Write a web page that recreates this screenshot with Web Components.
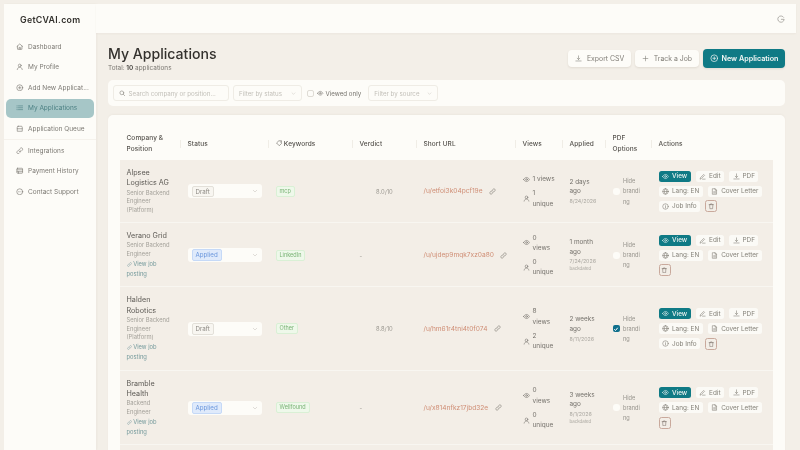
<!DOCTYPE html>
<html lang="en">
<head>
<meta charset="utf-8">
<title>My Applications</title>
<style>
  html, body { margin: 0; height: 100%; overflow: hidden; background: #f3efe8; }
  body { font-family: Inter, "Noto Sans", sans-serif; color: #3f3d39; }
</style>
</head>
<body>
<app-shell>
  <app-sidebar slot="side">
    <nav-item icon="home">Dashboard</nav-item>
    <nav-item icon="user">My Profile</nav-item>
    <nav-item icon="plus">Add New Applicat...</nav-item>
    <nav-item icon="list" active>My Applications</nav-item>
    <nav-item icon="queue">Application Queue</nav-item>
    <nav-item icon="link" slot="more">Integrations</nav-item>
    <nav-item icon="card" slot="more">Payment History</nav-item>
    <nav-item icon="chat" slot="more">Contact Support</nav-item>
  </app-sidebar>
  <top-bar slot="top"></top-bar>
  <page-header>
    <ui-button slot="actions" icon="download">Export CSV</ui-button>
    <ui-button slot="actions" icon="cross">Track a Job</ui-button>
    <ui-button slot="actions" icon="plus" primary>New Application</ui-button>
  </page-header>
  <filter-bar></filter-bar>
  <app-table>
    <app-row company="Alpsee Logistics AG" position="Senior Backend Engineer (Platform)" status="Draft" keyword="mcp" verdict="8.0/10" url="/u/etfoi3k04pcf19e" views="1 views" unique="1<br>unique" applied="2 days ago" date="8/24/2026" jobinfo></app-row>
    <app-row company="Verano Grid" position="Senior Backend Engineer" link status="Applied" keyword="LinkedIn" url="/u/ujdep9mqk7xz0a80" views="0<br>views" unique="0<br>unique" applied="1 month ago" date="7/24/2026" backdated></app-row>
    <app-row company="Halden Robotics" position="Senior Backend Engineer (Platform)" link status="Draft" keyword="Other" verdict="8.8/10" url="/u/hm61r4tni4t0f074" views="8<br>views" unique="2<br>unique" applied="2 weeks ago" date="8/11/2026" hidden-brand jobinfo></app-row>
    <app-row company="Bramble Health" position="Backend Engineer" link status="Applied" keyword="Wellfound" url="/u/x814nfkz17jbd32e" views="0<br>views" unique="0<br>unique" applied="3 weeks ago" date="8/1/2026" backdated></app-row>
  </app-table>
</app-shell>

<script>
const paths = {
  home: '<path d="M3 11l9-8 9 8"/><path d="M5 10v10h14V10"/><path d="M10 20v-6h4v6"/>',
  user: '<circle cx="12" cy="8" r="4.500"/><path d="M4 21c1-5 4-7.500 8-7.500s7 2.500 8 7.500"/>',
  plus: '<circle cx="12" cy="12" r="9.500"/><path d="M12 8v8M8 12h8"/>',
  list: '<path d="M8 6h13M8 12h13M8 18h13M3 6h1M3 12h1M3 18h1"/>',
  queue: '<path d="M7 4h10a3 3 0 0 1 3 3v13H4V7a3 3 0 0 1 3-3z"/><path d="M4 12h16"/>',
  link: '<path d="M10 14a4 4 0 0 0 6 0l4-4a4 4 0 0 0-6-6l-1.500 1.500"/><path d="M14 10a4 4 0 0 0-6 0l-4 4a4 4 0 0 0 6 6l1.500-1.500"/>',
  card: '<rect x="3" y="4" width="18" height="16" rx="2"/><path d="M3 9h18M3 15h18M8 15v5"/>',
  chat: '<circle cx="12" cy="12" r="9.500"/><path d="M8 12h.01M12 12h.01M16 12h.01"/>',
  download: '<path d="M12 3v12M7.500 11l4.500 4.500 4.500-4.500"/><path d="M3 20.500h18"/>',
  cross: '<path d="M12 4v16M4 12h16"/>',
  search: '<circle cx="10.500" cy="10.500" r="7"/><path d="M16 16l5 5"/>',
  chevron: '<path d="M5 9l7 7 7-7"/>',
  eye: '<path d="M2 12s3.500-7 10-7 10 7 10 7-3.500 7-10 7-10-7-10-7z"/><circle cx="12" cy="12" r="3"/>',
  tag: '<path d="M12 3h9v9l-9 9-9-9z"/><path d="M16.500 7.500h.01"/>',
  edit: '<path d="M4 20l1-4L16 5l3 3L8 19z"/><path d="M12 21h9"/>',
  globe: '<circle cx="12" cy="12" r="9.500"/><path d="M2.500 12h19M12 2.500c3 3 4 6 4 9.500s-1 6.500-4 9.500c-3-3-4-6-4-9.500s1-6.500 4-9.500z"/>',
  file: '<path d="M6 2.500h8l5 5v14H6z"/><path d="M14 2.500v5h5M9 13h7M9 17h7"/>',
  info: '<circle cx="12" cy="12" r="9.500"/><path d="M12 11v6M12 7.500h.01"/>',
  trash: '<path d="M4 6h16M9 6V3.500h6V6M6 6l1 15h10l1-15"/>',
  refresh: '<path d="M20 7a9.500 9.500 0 1 0 1.500 6H13"/>'
};
const icon = (name, size, width = 2) => `<svg width="${size}" height="${size}" viewBox="0 0 24 24" fill="none" stroke="currentColor" stroke-width="${width}" stroke-linecap="round" stroke-linejoin="round" aria-hidden="true">${paths[name]}</svg>`;

const COLUMNS = '61px 88px 84px 64px 99px 47px 43px 46px 121px';

class BaseElement extends HTMLElement {
  connectedCallback() {
    if (!this.shadowRoot) {
      this.attachShadow({ mode: 'open' }).innerHTML = this.template;
    }
  }
}

class AppShell extends BaseElement {
  get template() {
    return `
      <style>
        :host {
          display: grid;
          grid-template-columns: 92px 1fr;
          grid-template-rows: 29px 1fr;
          height: 446px;
          padding: 4px 4px 0;
          overflow: hidden;
          filter: blur(.45px);
        }
        .side { grid-row: 1 / 3; display: flex; min-height: 0; }
        .content { padding: 12.500px 11px 0 12px; min-width: 0; overflow: hidden; }
      </style>
      <div class="side"><slot name="side"></slot></div>
      <slot name="top"></slot>
      <div class="content"><slot></slot></div>
    `;
  }
}

class AppSidebar extends BaseElement {
  get template() {
    return `
      <style>
        :host {
          display: block;
          width: 92px;
          background: #fdfcf8;
          box-shadow: 1px 0 2px rgba(90, 80, 60, .05);
        }
        h1 {
          margin: 0;
          height: 29px;
          font: 600 8.800px/31px Inter, sans-serif;
          letter-spacing: .3px;
          color: #33312d;
          padding-left: 16px;
        }
        nav { display: flex; flex-direction: column; gap: 1.500px; padding: 4px 2px 0; }
        .rule { height: 1px; background: #f5f2ec; margin: -.5px -2px; }
      </style>
      <h1>GetCVAI.com</h1>
      <nav>
        <slot></slot>
        <div class="rule"></div>
        <slot name="more"></slot>
      </nav>
    `;
  }
}

class NavItem extends BaseElement {
  get template() {
    const active = this.hasAttribute('active');
    return `
      <style>
        :host {
          display: flex;
          align-items: center;
          gap: 4.500px;
          height: 19px;
          padding-left: 10px;
          border-radius: 5px;
          font-size: 6.500px;
          white-space: nowrap;
          color: ${active ? '#4d8184' : '#7d7a74'};
          background: ${active ? '#a6c6c7' : 'transparent'};
        }
        svg { flex: none; }
      </style>
      ${icon(this.getAttribute('icon'), 7.500)}
      <slot></slot>
    `;
  }
}

class TopBar extends BaseElement {
  get template() {
    return `
      <style>
        :host {
          display: flex;
          align-items: center;
          justify-content: flex-end;
          padding-right: 11px;
          background: #fdfcf8;
          color: #85827c;
          box-shadow: 0 1px 2px rgba(90, 80, 60, .05);
        }
        svg { display: block; }
      </style>
      ${icon('refresh', 8, 1.800)}
    `;
  }
}

class UiButton extends BaseElement {
  get template() {
    const primary = this.hasAttribute('primary');
    return `
      <style>
        :host {
          display: inline-flex;
          align-items: center;
          gap: ${primary ? 3.500 : 4.500}px;
          height: ${primary ? 19 : 17}px;
          padding: 0 ${primary ? 6.500 : 7}px;
          border-radius: 4px;
          font-size: ${primary ? 7.200 : 6.900}px;
          font-weight: ${primary ? 600 : 400};
          white-space: nowrap;
          color: ${primary ? '#f4f7f5' : '#827f78'};
          background: ${primary ? '#0f7a85' : '#fdfcf8'};
          box-shadow: 0 1px 2px rgba(90, 80, 60, .12);
        }
      </style>
      ${icon(this.getAttribute('icon'), primary ? 8.500 : 7)}
      <slot></slot>
    `;
  }
}

class PageHeader extends BaseElement {
  get template() {
    return `
      <style>
        :host { display: flex; justify-content: space-between; align-items: flex-start; height: 34.500px; }
        h2 { margin: 0; font-size: 14.100px; line-height: 16px; font-weight: 500; color: #33312d; }
        p { margin: 2.500px 0 0; font-size: 6.400px; line-height: 8px; color: #7a7771; }
        b { font-weight: 600; color: #45433f; }
        .actions { display: flex; align-items: center; gap: 4px; margin-top: 3px; }
      </style>
      <div>
        <h2>My Applications</h2>
        <p>Total: <b>10</b> applications</p>
      </div>
      <div class="actions"><slot name="actions"></slot></div>
    `;
  }
}

class FilterBar extends BaseElement {
  get template() {
    return `
      <style>
        :host {
          display: flex;
          align-items: center;
          height: 26px;
          margin-bottom: 9px;
          padding-left: 5px;
          box-sizing: border-box;
          background: #fdfcf8;
          border-radius: 5px;
          font-size: 6.200px;
        }
        .field {
          display: flex;
          align-items: center;
          justify-content: space-between;
          box-sizing: border-box;
          height: 16px;
          padding: 0 5px;
          border: 1px solid #efece5;
          border-radius: 3px;
          color: #c2bfb8;
          white-space: nowrap;
        }
        .search { width: 116px; margin-right: 4px; justify-content: flex-start; gap: 3px; }
        .search svg { color: #8f8c86; }
        .status { width: 69px; margin-right: 5px; }
        .source { width: 70px; margin-left: 7px; }
        .box { width: 7px; height: 7px; border: 1px solid #dfdcd5; border-radius: 2px; box-sizing: border-box; margin-right: 3px; }
        .viewed { display: flex; align-items: center; gap: 2px; color: #77746e; white-space: nowrap; }
      </style>
      <div class="field search">${icon('search', 6.500, 2.400)}<span>Search company or position...</span></div>
      <div class="field status"><span>Filter by status</span>${icon('chevron', 5)}</div>
      <div class="box"></div>
      <div class="viewed">${icon('eye', 6.500)}<span>Viewed only</span></div>
      <div class="field source"><span>Filter by source</span>${icon('chevron', 5)}</div>
    `;
  }
}

class AppTable extends BaseElement {
  get template() {
    const heads = [
      'Company &amp; Position', 'Status', `${icon('tag', 6.500)} Keywords`, 'Verdict',
      'Short URL', 'Views', 'Applied', 'PDF Options', 'Actions'
    ];
    return `
      <style>
        :host {
          display: block;
          padding: 10px 12px 0;
          background: #fdfcf8;
          border-radius: 5px 5px 0 0;
          box-shadow: 0 -1px 2px rgba(90, 80, 60, .04);
        }
        header {
          display: grid;
          grid-template-columns: ${COLUMNS};
          align-items: center;
          box-sizing: border-box;
          height: 35px;
          padding-top: 2.500px;
          font-size: 6.500px;
          line-height: 10.300px;
          font-weight: 500;
          color: #55524d;
          letter-spacing: .1px;
        }
        header div { padding-left: 6.500px; position: relative; }
        header div + div::before {
          content: "";
          position: absolute;
          left: -1px;
          top: 50%;
          height: 8px;
          margin-top: -4px;
          width: 1px;
          background: #f0ede6;
        }
        svg { vertical-align: -1px; }
        .more { height: 30px; background: #f3eee7; }
      </style>
      <header>${heads.map(h => `<div>${h}</div>`).join('')}</header>
      <slot></slot>
      <div class="more"></div>
    `;
  }
}

class ActionChip extends BaseElement {
  get template() {
    const primary = this.hasAttribute('primary');
    return `
      <style>
        :host {
          display: inline-flex;
          align-items: center;
          gap: 3px;
          box-sizing: border-box;
          height: 11px;
          padding: 0 3.500px;
          border-radius: 2.500px;
          font-size: 6.400px;
          white-space: nowrap;
          color: ${primary ? '#eef5f3' : '#858279'};
          font-weight: ${primary ? 500 : 400};
          background: ${primary ? '#0f7a85' : '#fbfaf6'};
        }
        svg { flex: none; }
      </style>
      ${icon(this.getAttribute('icon'), 7)}
      <slot></slot>
    `;
  }
}

class AppRow extends BaseElement {
  get template() {
    const a = name => this.getAttribute(name);
    const has = name => this.hasAttribute(name);
    const applied = a('status') === 'Applied';
    return `
      <style>
        :host {
          display: grid;
          grid-template-columns: ${COLUMNS};
          align-items: center;
          padding: 8px 0 7px;
          background: #f3eee7;
          border-bottom: 1px solid #f8f6f1;
          font-size: 6.700px;
          color: #75726c;
        }
        .cell { padding-left: 6.500px; min-width: 0; }
        .company { padding-right: 11.500px; }
        .name { font-size: 7.200px; line-height: 10.300px; color: #5d5a55; }
        .pos { font-size: 5.800px; line-height: 8.800px; color: #a5a29b; }
        .job { font-size: 5.800px; line-height: 10.200px; color: #759a9c; }
        .job svg { vertical-align: -1px; }
        .select {
          display: flex;
          align-items: center;
          justify-content: space-between;
          box-sizing: border-box;
          width: 74px;
          height: 14px;
          padding: 0 4px;
          background: #fdfcf8;
          border-radius: 3px;
          color: #c2bfb8;
        }
        .badge {
          font-size: 6.200px;
          line-height: 9.500px;
          padding: 0 3px;
          border-radius: 2px;
          border: .5px solid ${applied ? '#c5d9f7' : '#e3e0d9'};
          color: ${applied ? '#6a96dc' : '#8c8983'};
          background: ${applied ? '#dfeafb' : '#f8f6f1'};
        }
        .tag {
          display: inline-block;
          font-size: 5.500px;
          line-height: 9px;
          padding: 0 3px;
          border-radius: 2px;
          border: .5px solid #d9f0d5;
          background: #eef8ea;
          color: #78b374;
        }
        .verdict { font-size: 5.800px; color: #9c9992; }
        .verdict.score { padding-left: 23px; }
        .url { display: flex; align-items: center; gap: 6.500px; white-space: nowrap; font-size: 6.600px; color: #cf8d74; }
        .url svg { color: #7f7c76; flex: none; }
        .stat { display: grid; grid-template-columns: 10px 28px; align-items: center; font-size: 6.500px; line-height: 10.300px; }
        .stat + .stat { margin-top: 3.800px; }
        .stat svg { display: block; }
        .applied { padding-right: 11px; }
        .when { font-size: 6.400px; line-height: 9.800px; }
        .date { font-size: 5.300px; line-height: 8px; color: #aaa7a0; }
        .small { font-size: 4.400px; line-height: 7px; color: #aaa7a0; }
        .pdf { display: flex; align-items: center; gap: 3.500px; font-size: 5.600px; line-height: 10.300px; color: #95928b; }
        .check {
          flex: none;
          display: flex;
          align-items: center;
          justify-content: center;
          width: 7px;
          height: 7px;
          border-radius: 3px;
          background: #fdfcf8;
          color: #fff;
        }
        .check.on { background: #0f6f8c; border-radius: 2px; }
        .pdf span { width: 17px; overflow-wrap: anywhere; }
        .actions { display: flex; flex-wrap: wrap; gap: 4px 5px; align-items: center; }
        .trash {
          display: flex;
          align-items: center;
          justify-content: center;
          box-sizing: border-box;
          width: 12px;
          height: 12px;
          margin: -.5px 0;
          border: .7px solid #c9a99c;
          border-radius: 2.500px;
          color: #7b6f68;
        }
      </style>
      <div class="cell company">
        <div class="name">${a('company')}</div>
        <div class="pos">${a('position')}</div>
        ${has('link') ? `<div class="job">${icon('link', 5)} View job posting</div>` : ''}
      </div>
      <div class="cell">
        <div class="select"><span class="badge">${a('status')}</span>${icon('chevron', 6)}</div>
      </div>
      <div class="cell"><span class="tag">${a('keyword')}</span></div>
      <div class="cell verdict ${has('verdict') ? 'score' : ''}">${a('verdict') || '-'}</div>
      <div class="cell"><div class="url"><span>${a('url')}</span>${icon('link', 7)}</div></div>
      <div class="cell">
        <div class="stat">${icon('eye', 7)}<span>${a('views')}</span></div>
        <div class="stat">${icon('user', 7)}<span>${a('unique')}</span></div>
      </div>
      <div class="cell applied">
        <div class="when">${a('applied')}</div>
        <div class="date">${a('date')}</div>
        ${has('backdated') ? '<div class="small">backdated</div>' : ''}
      </div>
      <div class="cell">
        <div class="pdf">
          <div class="check ${has('hidden-brand') ? 'on' : ''}">${has('hidden-brand') ? '<svg width="6" height="6" viewBox="0 0 24 24" fill="none" stroke="currentColor" stroke-width="4"><path d="M5 13l5 5 9-11"/></svg>' : ''}</div>
          <span>Hide branding</span>
        </div>
      </div>
      <div class="cell actions">
        <action-chip icon="eye" primary>View</action-chip>
        <action-chip icon="edit">Edit</action-chip>
        <action-chip icon="download">PDF</action-chip>
        <action-chip icon="globe">Lang: EN</action-chip>
        <action-chip icon="file">Cover Letter</action-chip>
        ${has('jobinfo') ? '<action-chip icon="info">Job Info</action-chip>' : ''}
        <div class="trash">${icon('trash', 6.500)}</div>
      </div>
    `;
  }
}

customElements.define('app-shell', AppShell);
customElements.define('app-sidebar', AppSidebar);
customElements.define('nav-item', NavItem);
customElements.define('top-bar', TopBar);
customElements.define('ui-button', UiButton);
customElements.define('page-header', PageHeader);
customElements.define('filter-bar', FilterBar);
customElements.define('app-table', AppTable);
customElements.define('action-chip', ActionChip);
customElements.define('app-row', AppRow);
</script>
</body>
</html>
